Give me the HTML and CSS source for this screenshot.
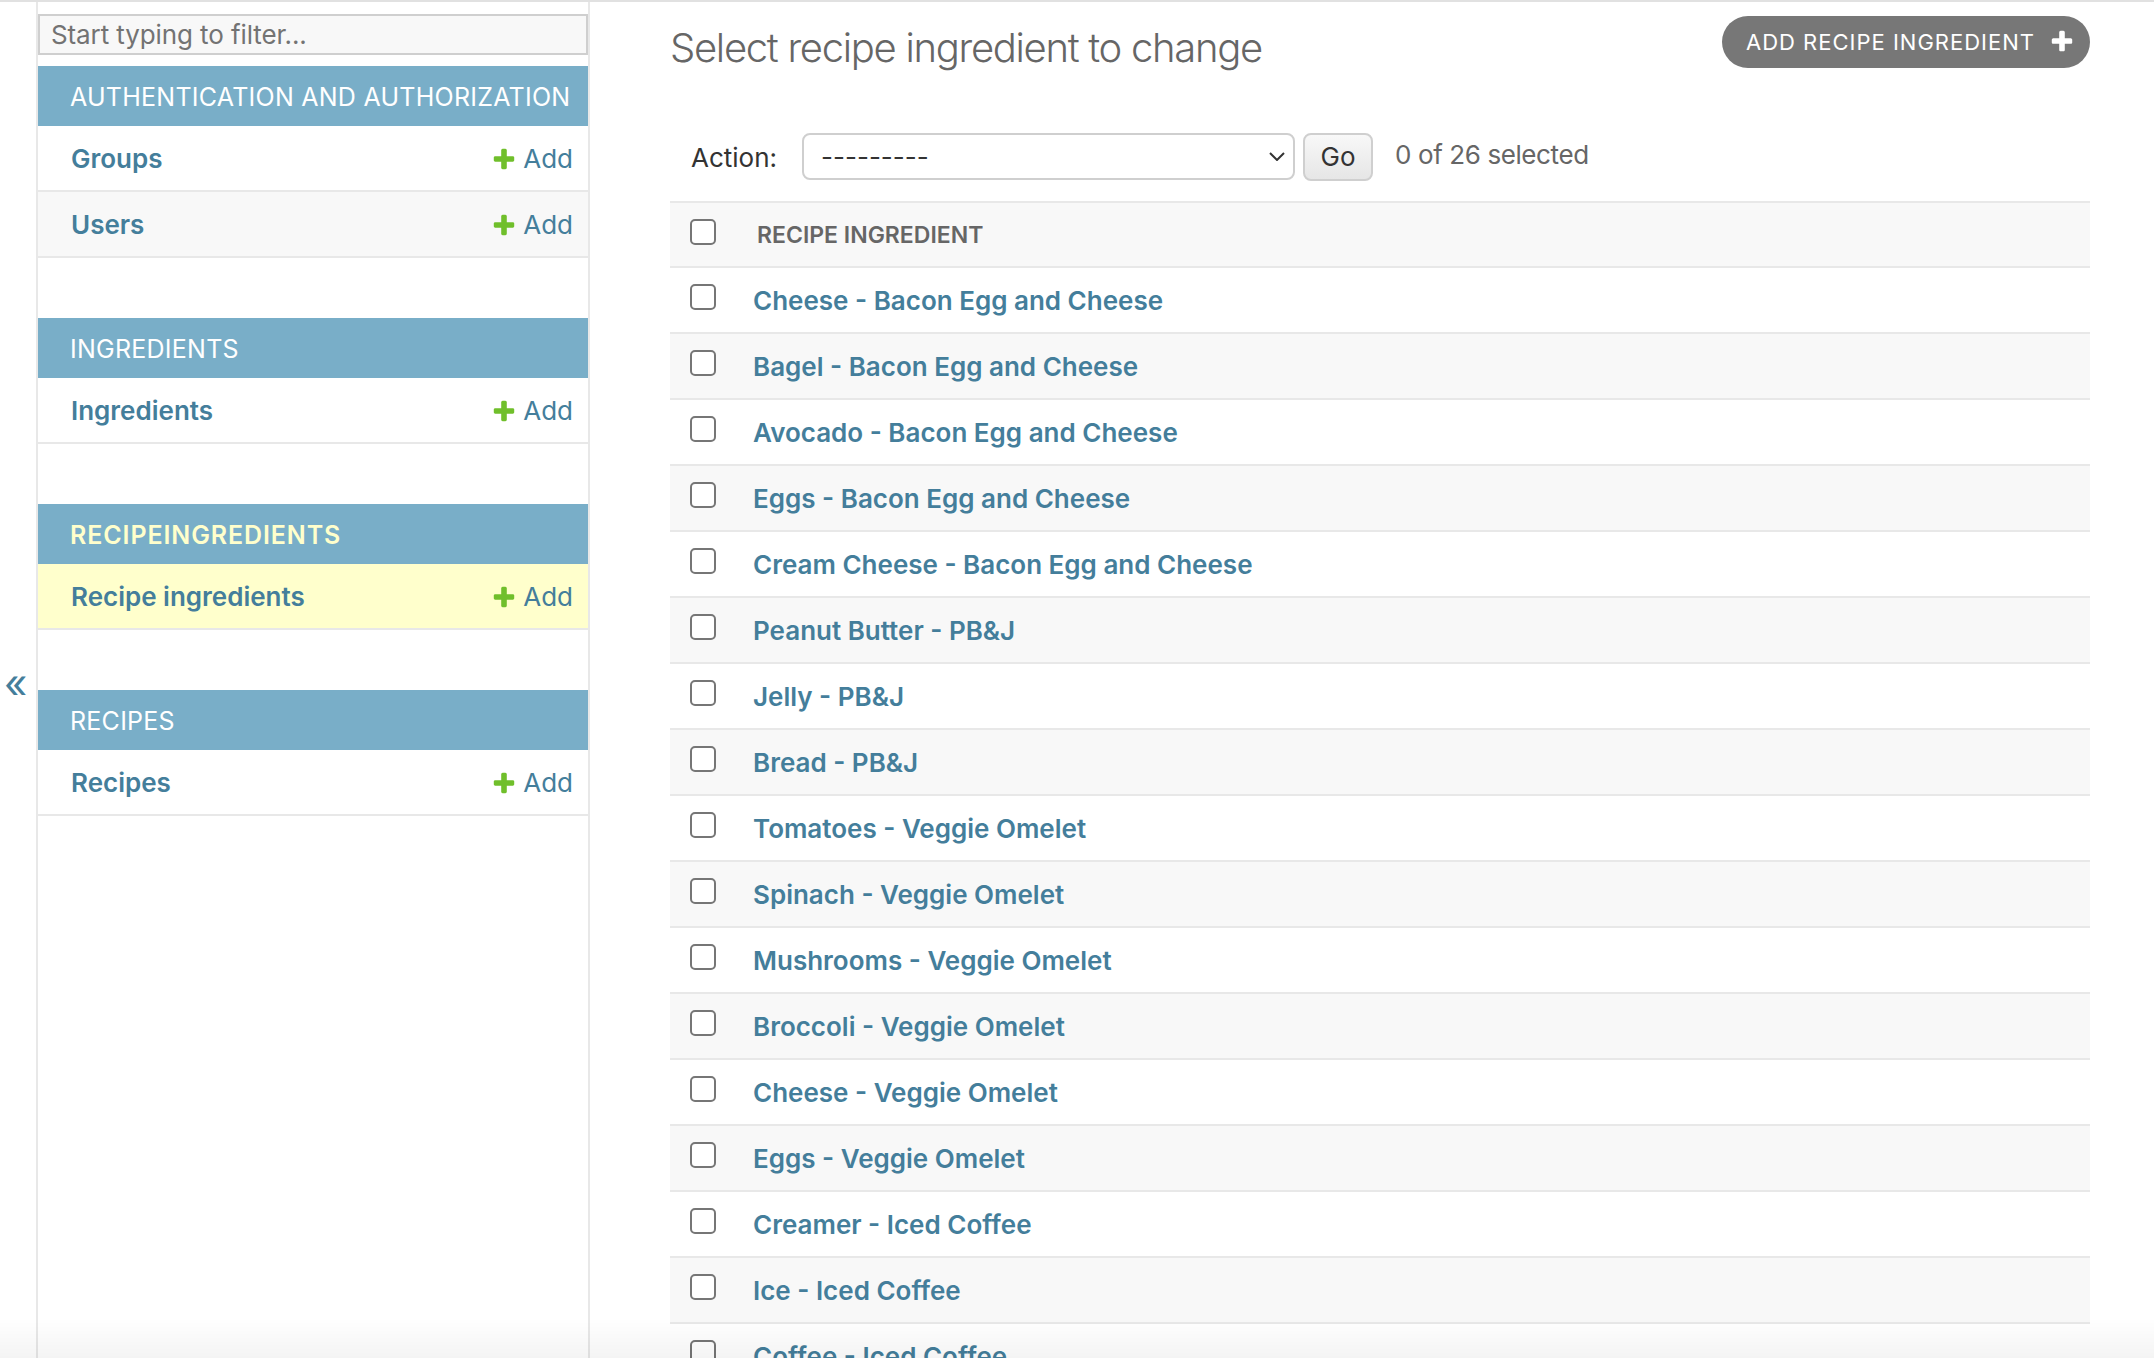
FILE: index.html
```html
<!DOCTYPE html>
<html lang="en">
<head>
<meta charset="utf-8">
<title>Select recipe ingredient to change</title>
<link rel="stylesheet" href="styles.css">
</head>
<body>
<div class="page">
  <button class="toggle" type="button" aria-label="Toggle navigation">«</button>
  <nav class="sidebar">
    <input class="filter" type="search" placeholder="Start typing to filter...">
    <div class="module">
      <div class="caption">Authentication and Authorization</div>
      <div class="mrow"><a class="model" href="#">Groups</a><a class="add" href="#"><svg class="plus" viewBox="0 0 1792 1792"><path d="M1600 796v192q0 40-28 68t-68 28h-416v416q0 40-28 68t-68 28h-192q-40 0-68-28t-28-68v-416h-416q-40 0-68-28t-28-68v-192q0-40 28-68t68-28h416v-416q0-40 28-68t68-28h192q40 0 68 28t28 68v416h416q40 0 68 28t28 68z"/></svg>Add</a></div>
      <div class="mrow alt"><a class="model" href="#">Users</a><a class="add" href="#"><svg class="plus" viewBox="0 0 1792 1792"><path d="M1600 796v192q0 40-28 68t-68 28h-416v416q0 40-28 68t-68 28h-192q-40 0-68-28t-28-68v-416h-416q-40 0-68-28t-28-68v-192q0-40 28-68t68-28h416v-416q0-40 28-68t68-28h192q40 0 68 28t28 68v416h416q40 0 68 28t28 68z"/></svg>Add</a></div>
    </div>
    <div class="module">
      <div class="caption">Ingredients</div>
      <div class="mrow"><a class="model" href="#">Ingredients</a><a class="add" href="#"><svg class="plus" viewBox="0 0 1792 1792"><path d="M1600 796v192q0 40-28 68t-68 28h-416v416q0 40-28 68t-68 28h-192q-40 0-68-28t-28-68v-416h-416q-40 0-68-28t-28-68v-192q0-40 28-68t68-28h416v-416q0-40 28-68t68-28h192q40 0 68 28t28 68v416h416q40 0 68 28t28 68z"/></svg>Add</a></div>
    </div>
    <div class="module">
      <div class="caption current">Recipeingredients</div>
      <div class="mrow selected"><a class="model" href="#">Recipe ingredients</a><a class="add" href="#"><svg class="plus" viewBox="0 0 1792 1792"><path d="M1600 796v192q0 40-28 68t-68 28h-416v416q0 40-28 68t-68 28h-192q-40 0-68-28t-28-68v-416h-416q-40 0-68-28t-28-68v-192q0-40 28-68t68-28h416v-416q0-40 28-68t68-28h192q40 0 68 28t28 68v416h416q40 0 68 28t28 68z"/></svg>Add</a></div>
    </div>
    <div class="module">
      <div class="caption">Recipes</div>
      <div class="mrow"><a class="model" href="#">Recipes</a><a class="add" href="#"><svg class="plus" viewBox="0 0 1792 1792"><path d="M1600 796v192q0 40-28 68t-68 28h-416v416q0 40-28 68t-68 28h-192q-40 0-68-28t-28-68v-416h-416q-40 0-68-28t-28-68v-192q0-40 28-68t68-28h416v-416q0-40 28-68t68-28h192q40 0 68 28t28 68v416h416q40 0 68 28t28 68z"/></svg>Add</a></div>
    </div>
  </nav>
  <main class="content">
    <div class="head">
      <h1>Select recipe ingredient to change</h1>
      <a class="addbtn" href="#">Add recipe ingredient<svg class="wplus" viewBox="0 0 1792 1792"><path d="M1600 736v192q0 40-28 68t-68 28h-416v416q0 40-28 68t-68 28h-192q-40 0-68-28t-28-68v-416h-416q-40 0-68-28t-28-68v-192q0-40 28-68t68-28h416v-416q0-40 28-68t68-28h192q40 0 68 28t28 68v416h416q40 0 68 28t28 68z"/></svg></a>
    </div>
    <div class="actions">
      <label class="alabel">Action:</label>
      <div class="select"><span>---------</span><svg class="chev" viewBox="0 0 16 9"><path d="M1 1l7 7 7-7"/></svg></div>
      <button class="go" type="button">Go</button>
      <span class="count">0 of 26 selected</span>
    </div>
    <table class="results">
      <thead>
        <tr><th class="cbcell"><input class="cb" type="checkbox"></th><th class="colhead">Recipe ingredient</th></tr>
      </thead>
      <tbody>
        <tr><td class="cbcell"><input class="cb" type="checkbox"></td><th class="name"><a href="#">Cheese - Bacon Egg and Cheese</a></th></tr>
        <tr><td class="cbcell"><input class="cb" type="checkbox"></td><th class="name"><a href="#">Bagel - Bacon Egg and Cheese</a></th></tr>
        <tr><td class="cbcell"><input class="cb" type="checkbox"></td><th class="name"><a href="#">Avocado - Bacon Egg and Cheese</a></th></tr>
        <tr><td class="cbcell"><input class="cb" type="checkbox"></td><th class="name"><a href="#">Eggs - Bacon Egg and Cheese</a></th></tr>
        <tr><td class="cbcell"><input class="cb" type="checkbox"></td><th class="name"><a href="#">Cream Cheese - Bacon Egg and Cheese</a></th></tr>
        <tr><td class="cbcell"><input class="cb" type="checkbox"></td><th class="name"><a href="#">Peanut Butter - PB&amp;J</a></th></tr>
        <tr><td class="cbcell"><input class="cb" type="checkbox"></td><th class="name"><a href="#">Jelly - PB&amp;J</a></th></tr>
        <tr><td class="cbcell"><input class="cb" type="checkbox"></td><th class="name"><a href="#">Bread - PB&amp;J</a></th></tr>
        <tr><td class="cbcell"><input class="cb" type="checkbox"></td><th class="name"><a href="#">Tomatoes - Veggie Omelet</a></th></tr>
        <tr><td class="cbcell"><input class="cb" type="checkbox"></td><th class="name"><a href="#">Spinach - Veggie Omelet</a></th></tr>
        <tr><td class="cbcell"><input class="cb" type="checkbox"></td><th class="name"><a href="#">Mushrooms - Veggie Omelet</a></th></tr>
        <tr><td class="cbcell"><input class="cb" type="checkbox"></td><th class="name"><a href="#">Broccoli - Veggie Omelet</a></th></tr>
        <tr><td class="cbcell"><input class="cb" type="checkbox"></td><th class="name"><a href="#">Cheese - Veggie Omelet</a></th></tr>
        <tr><td class="cbcell"><input class="cb" type="checkbox"></td><th class="name"><a href="#">Eggs - Veggie Omelet</a></th></tr>
        <tr><td class="cbcell"><input class="cb" type="checkbox"></td><th class="name"><a href="#">Creamer - Iced Coffee</a></th></tr>
        <tr><td class="cbcell"><input class="cb" type="checkbox"></td><th class="name"><a href="#">Ice - Iced Coffee</a></th></tr>
        <tr><td class="cbcell"><input class="cb" type="checkbox"></td><th class="name"><a href="#">Coffee - Iced Coffee</a></th></tr>
      </tbody>
    </table>
  </main>
</div>
</body>
</html>
```
FILE: styles.css
```css
* { box-sizing: border-box; }
html, body { margin: 0; padding: 0; }
body {
  font-family: Inter, "Noto Sans", sans-serif;
  font-size: 26px;
  line-height: 32px;
  color: #333;
  background: #fff;
}
a { text-decoration: none; }

.page {
  display: flex;
  align-items: stretch;
  min-height: 100vh;
  border-top: 2px solid #e1e1e1;
}

/* sidebar toggle */
.toggle {
  flex: 0 0 38px;
  height: calc(100vh - 2px);
  display: flex;
  align-items: center;
  justify-content: flex-start;
  padding: 8px 0 0 4px;
  margin: 0;
  border: 0;
  border-right: 2px solid #e8e8e8;
  background: #fff;
  color: #447e9b;
  font-family: Inter, sans-serif;
  font-size: 40px;
  line-height: 1;
}

/* sidebar */
.sidebar {
  flex: 0 0 552px;
  min-width: 0;
  border-right: 2px solid #e8e8e8;
}
.filter {
  display: block;
  width: 100%;
  height: 41px;
  margin: 12px 0 11px;
  padding: 0 11px;
  border: 2px solid #cfcfcf;
  border-radius: 0;
  background: #f8f8f8;
  font-family: Inter, sans-serif;
  font-size: 26px;
  letter-spacing: -0.1px;
  color: #333;
  outline: none;
  -webkit-appearance: none;
  appearance: none;
}
.filter::placeholder { color: #737373; }

.module { margin-bottom: 60px; }
.caption {
  height: 60px;
  line-height: 58px;
  padding: 2px 0 0 32px;
  background: #79aec8;
  color: #fff;
  font-size: 25px;
  text-transform: uppercase;
  letter-spacing: 0.25px;
  white-space: nowrap;
  overflow: hidden;
}
.caption.current { color: #ffc; font-weight: 600; letter-spacing: 0.9px; }

.mrow {
  display: flex;
  align-items: center;
  justify-content: space-between;
  padding: 17px 15px 15px 33px;
  border-bottom: 2px solid #e8e8e8;
  background: #fff;
}
.mrow.alt { background: #f8f8f8; }
.mrow.selected { background: #ffc; }
.model { color: #447e9b; font-weight: 600; }
.add {
  display: flex;
  align-items: center;
  gap: 9px;
  color: #447e9b;
}
.plus { width: 26px; height: 26px; margin-right: -3px; fill: #70bf2b; }

/* main content */
.content {
  flex: 1 1 auto;
  min-width: 0;
  padding: 14px 64px 0 80px;
}
.head {
  display: flex;
  justify-content: space-between;
  align-items: flex-start;
}
h1 {
  margin: 8px 0 0;
  font-size: 40px;
  line-height: 48px;
  font-weight: 300;
  letter-spacing: -1.3px;
  color: #666;
}
.addbtn {
  display: flex;
  align-items: center;
  gap: 14px;
  height: 52px;
  padding: 0 15px 0 24px;
  border-radius: 26px;
  background: #777;
  color: #fff;
  font-size: 22px;
  letter-spacing: 1px;
  text-transform: uppercase;
  white-space: nowrap;
}
.wplus { width: 26px; height: 26px; fill: #fff; }

.actions {
  display: flex;
  align-items: center;
  height: 47px;
  margin-top: 61px;
  padding-left: 21px;
}
.alabel { margin-right: 25px; color: #333; padding-top: 2px; }
.select {
  display: flex;
  align-items: center;
  justify-content: space-between;
  width: 493px;
  height: 47px;
  padding: 0 8px 0 17px;
  border: 2px solid #cfcfcf;
  border-radius: 8px;
  background: #fff;
  color: #333;
}
.chev { width: 16px; height: 9px; fill: none; stroke: #333; stroke-width: 2; }
.go {
  margin: 0 0 0 8px;
  width: 70px;
  height: 48px;
  padding: 0;
  border: 2px solid #cfcfcf;
  border-radius: 8px;
  background: linear-gradient(#f8f8f8, #e6e6e6);
  color: #333;
  font-family: Inter, sans-serif;
  font-size: 26px;
}
.count { margin-left: 22px; padding-bottom: 4px; color: #666; letter-spacing: -0.4px; }

.results {
  width: 100%;
  margin-top: 21px;
  border-collapse: separate;
  border-spacing: 0;
}
.results th, .results td {
  padding: 16px 0;
  text-align: left;
  vertical-align: top;
  border-bottom: 2px solid #e8e8e8;
}
.results thead th {
  background: #f8f8f8;
  border-top: 2px solid #e8e8e8;
  padding-bottom: 15px;
}
.cbcell { width: 1px; padding-left: 20px !important; }
.cb {
  display: block;
  width: 26px;
  height: 26px;
  margin: 0;
  border: 2px solid #767676;
  border-radius: 5px;
  background: #fff;
  -webkit-appearance: none;
  appearance: none;
}
.colhead {
  padding-left: 41px !important;
  font-size: 23px;
  font-weight: 600;
  color: #666;
  text-transform: uppercase;
}
.results .name { padding: 17px 0 15px 37px; font-weight: 600; }
.name a { color: #447e9b; }
.results tbody tr:nth-child(even) { background: #f8f8f8; }

body::after {
  content: "";
  position: fixed;
  left: 0;
  right: 0;
  bottom: 0;
  height: 40px;
  background: linear-gradient(rgba(0,0,0,0), rgba(0,0,0,0.045));
  pointer-events: none;
}
```
